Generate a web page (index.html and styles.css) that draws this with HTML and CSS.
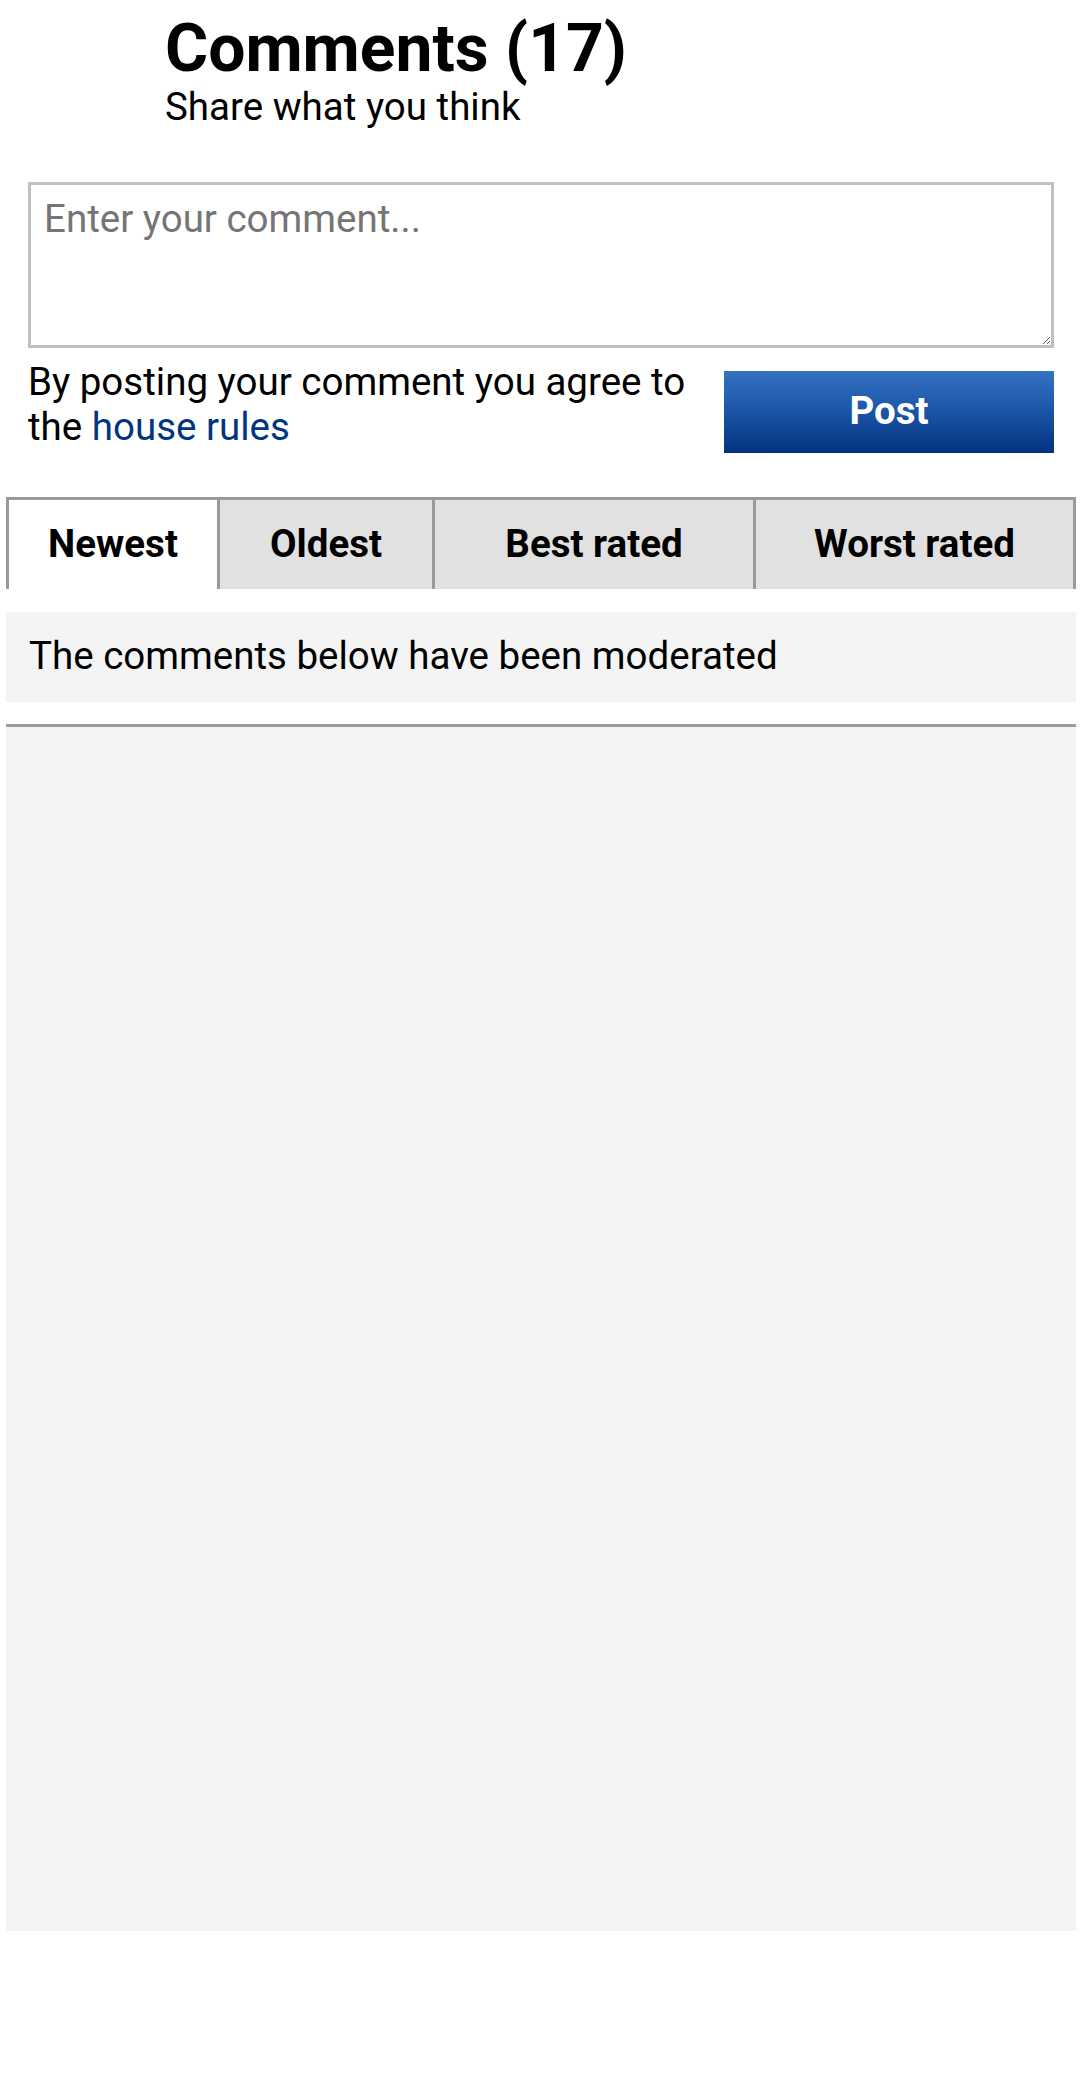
FILE: index.html
```html
<!DOCTYPE html>
<html lang="en">
<head>
<meta charset="utf-8">
<title>Comments</title>
<link rel="stylesheet" href="styles.css">
</head>
<body>
<div class="page">
  <header class="head">
    <h1 class="title">Comments (17)</h1>
    <p class="subtitle">Share what you think</p>
  </header>

  <form class="compose">
    <textarea class="input" placeholder="Enter your comment..."></textarea>
    <div class="compose-foot">
      <p class="rules">By posting your comment you agree to the <a href="#" class="rules-link">house rules</a></p>
      <button type="button" class="post">Post</button>
    </div>
  </form>

  <nav class="tabs">
    <div class="tab tab-active">Newest</div>
    <div class="tab">Oldest</div>
    <div class="tab">Best rated</div>
    <div class="tab tab-last">Worst rated</div>
  </nav>

  <div class="notice">The comments below have been moderated</div>

  <div class="divider"></div>
  <div class="list"></div>
</div>
</body>
</html>
```

FILE: styles.css
```css
* { box-sizing: border-box; }

html, body {
  margin: 0;
  padding: 0;
  background: #ffffff;
}

body {
  font-family: Roboto, "Liberation Sans", Arial, sans-serif;
  color: #000;
}

.page {
  padding: 0 4px 0 6px;
}

.head {
  padding-left: 159px;
  padding-top: 13px;
}

.title {
  margin: 0;
  font-size: 66px;
  line-height: 72px;
  font-weight: 700;
}

.subtitle {
  margin: 0;
  font-size: 38.5px;
  line-height: 43px;
  font-weight: 400;
}

.compose {
  margin: 54px 0 0;
  padding: 0 22px;
}

.input {
  display: block;
  width: 100%;
  height: 166px;
  margin: 0;
  border: 3px solid #c0c0c0;
  border-radius: 0;
  padding: 11px 13px;
  font-family: Roboto, "Liberation Sans", Arial, sans-serif;
  font-size: 38.5px;
  line-height: 46px;
  color: #000;
  background: #fff;
  resize: vertical;
  outline: none;
}

.input::placeholder {
  color: #757575;
}

.compose-foot {
  display: flex;
  align-items: flex-start;
  gap: 20px;
  margin-top: 11px;
}

.rules {
  flex: 1;
  margin: 0;
  font-size: 38.5px;
  line-height: 45px;
}

.rules-link {
  color: #003580;
  text-decoration: none;
}

.post {
  flex: 0 0 330px;
  height: 82px;
  margin-top: 12px;
  border: 0;
  border-radius: 0;
  background: linear-gradient(to bottom, #3472c2 0%, #1b54a6 50%, #02327e 100%);
  color: #fff;
  font-family: Roboto, "Liberation Sans", Arial, sans-serif;
  font-size: 38.5px;
  font-weight: 700;
  padding: 0 0 4px;
}

.tabs {
  display: grid;
  grid-template-columns: 211px 215px 321px 1fr;
  margin-top: 44px;
}

.tab {
  background: #e1e1e1;
  border-top: 3px solid #9a9a9a;
  border-left: 3px solid #9a9a9a;
  text-align: center;
  font-size: 38.5px;
  font-weight: 700;
  line-height: 43px;
  padding: 22px 0 24px;
  white-space: nowrap;
}

.tab-active {
  background: #ffffff;
}

.tab-last {
  border-right: 3px solid #9a9a9a;
}

.notice {
  margin-top: 23px;
  background: #f4f4f4;
  padding: 21px 23px 23px;
  font-size: 38.5px;
  line-height: 46px;
}

.divider {
  margin-top: 22px;
  height: 3px;
  background: #9a9a9a;
}

.list {
  height: 1204px;
  background: #f4f4f4;
}
```
